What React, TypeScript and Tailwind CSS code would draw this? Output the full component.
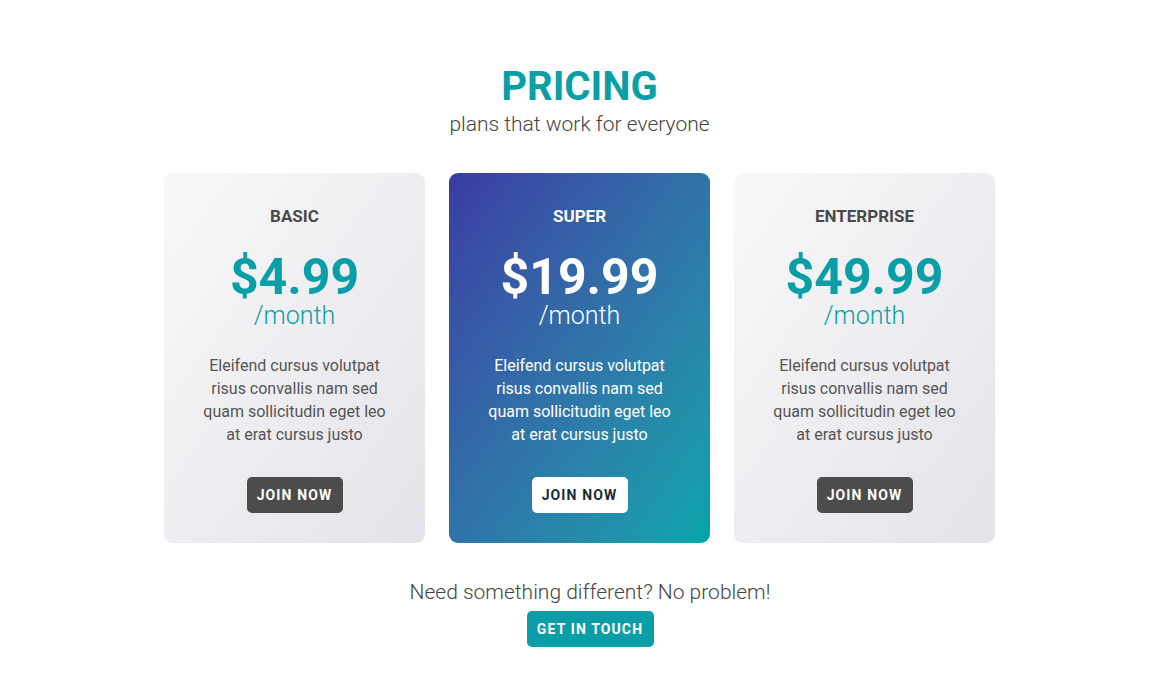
import React from "react";

type Plan = {
  name: string;
  price: string;
  featured?: boolean;
};

const plans: Plan[] = [
  { name: "BASIC", price: "$4.99" },
  { name: "SUPER", price: "$19.99", featured: true },
  { name: "ENTERPRISE", price: "$49.99" },
];

const blurb = [
  "Eleifend cursus volutpat",
  "risus convallis nam sed",
  "quam sollicitudin eget leo",
  "at erat cursus justo",
];

const PlanCard: React.FC<{ plan: Plan }> = ({ plan }) => {
  const featured = !!plan.featured;
  return (
    <div
      className={`w-[261px] h-[370px] rounded-[9px] flex flex-col items-center pt-[32px] ${
        featured
          ? "bg-gradient-to-br from-[#3a3ba3] to-[#04a5aa] text-white"
          : "bg-gradient-to-br from-[#f8f8f9] to-[#e4e3e9] text-[#4a4a4a]"
      }`}
    >
      {/* plan name */}
      <h3 className="text-[17px] font-bold leading-[22px]">{plan.name}</h3>

      {/* price */}
      <div
        className={`mt-[25px] text-[50px] font-bold leading-[50px] ${
          featured ? "text-white" : "text-[#0a9fa7]"
        }`}
      >
        {plan.price}
      </div>
      <div
        className={`text-[25px] font-light leading-[28px] mt-[0px] ${
          featured ? "text-white" : "text-[#0a9fa7]"
        }`}
      >
        /month
      </div>

      {/* description */}
      <div
        className={`mt-[24px] text-[16px] leading-[23px] text-center ${
          featured ? "text-white" : "text-[#555555]"
        }`}
      >
        {blurb.map((line) => (
          <p key={line}>{line}</p>
        ))}
      </div>

      <button
        className={`mt-[31px] w-[96px] h-[36px] rounded-[5px] text-[14px] font-bold tracking-[0.08em] ${
          featured ? "bg-white text-[#1c2b33]" : "bg-[#4c4c4c] text-white"
        }`}
      >
        JOIN NOW
      </button>
    </div>
  );
};

const App: React.FC = () => {
  return (
    <div
      className="min-h-screen bg-white flex flex-col items-center pt-[64px] pr-[4px]"
      style={{ fontFamily: "Roboto, 'Liberation Sans', sans-serif" }}
    >
      <h1 className="text-[40px] font-bold leading-[46px] text-[#0a9fa7]">
        PRICING
      </h1>
      <p className="text-[21px] font-light leading-[26px] text-[#444444] mt-[1px]">
        plans that work for everyone
      </p>

      <div className="flex gap-[24px] mt-[36px]">
        {plans.map((p) => (
          <PlanCard key={p.name} plan={p} />
        ))}
      </div>

      <div className="flex flex-col items-center mt-[36px] pl-[21px]">
        <p className="text-[21px] font-light leading-[26px] text-[#444444]">
          Need something different? No problem!
        </p>
        <button className="mt-[6px] w-[127px] h-[36px] rounded-[5px] bg-[#0b9ea6] text-white text-[14px] font-bold tracking-[0.08em]">
          GET IN TOUCH
        </button>
      </div>
    </div>
  );
};

export default App;
